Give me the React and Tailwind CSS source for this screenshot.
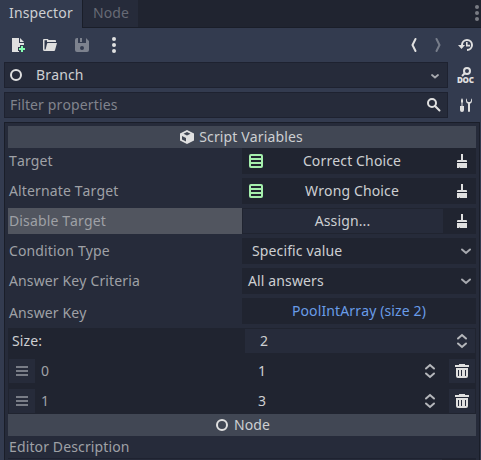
import React from "react";

function Svg({ children, className = "", w = 16, h = 16 }) {
  return (
    <svg width={w} height={h} viewBox={`0 0 ${w} ${h}`} fill="none" className={`block shrink-0 overflow-visible ${className}`}>
      {children}
    </svg>
  );
}

const Ring = () => (
  <Svg>
    <circle cx="8" cy="8" r="5" stroke="#e0e0e0" strokeWidth="2" />
  </Svg>
);

const NewFile = () => (
  <Svg>
    <path fill="#e0e0e0" d="M2 1v14h7v-1H8v-4h2V8h4V6H9V1zm8 0v4h4z" />
    <path fill="#84ffb1" d="M11 9h2v2h2v2h-2v2h-2v-2H9v-2h2z" />
  </Svg>
);

const Folder = () => (
  <Svg>
    <path fill="#e0e0e0" d="M2 2a1 1 0 0 0-1 1v9.5A1.5 1.5 0 0 0 2.5 14H12a1 1 0 0 0 1-.8L15 6H6a1 1 0 0 0-1 .8L3.6 12.5H2.5V3.2H5V5h9V4a1 1 0 0 0-1-1H6.5A1.2 1.2 0 0 0 5 2z" />
  </Svg>
);

const Save = () => (
  <Svg>
    <path fill="#7d828e" fillRule="evenodd" d="M3 1a2 2 0 0 0-2 2v10a2 2 0 0 0 2 2h10a2 2 0 0 0 2-2V4l-3-3v5H4V1zm3 0v4h2V1zM8 9a2 2 0 1 1 0 4 2 2 0 0 1 0-4z" />
  </Svg>
);

const Dots = ({ color }) => (
  <Svg>
    <g fill={color}>
      <circle cx="8" cy="2" r="2" />
      <circle cx="8" cy="8" r="2" />
      <circle cx="8" cy="14" r="2" />
    </g>
  </Svg>
);

const History = () => (
  <Svg>
    <path d="M4 8a5 5 0 1 1 5 5" stroke="#e0e0e0" strokeWidth="2" />
    <path d="M0 8h7l-3.5 4z" fill="#e0e0e0" />
    <path d="M8.8 5v3.6H12" stroke="#e0e0e0" strokeWidth="1.6" />
  </Svg>
);

const Doc = () => (
  <div className="relative h-4 w-4">
    <Svg>
      <circle cx="9" cy="4" r="3" stroke="#e0e0e0" strokeWidth="2" />
      <path d="M7 6L4 9" stroke="#e0e0e0" strokeWidth="2" />
    </Svg>
    <span className="absolute -left-px top-[8px] text-[8px] font-black leading-[10px] tracking-[-0.3px] text-[#e0e0e0]">DOC</span>
  </div>
);

const Tools = () => (
  <Svg>
    <path fill="#e0e0e0" d="M4 1L3 3v2l.5 1v3H2v4a2 2 0 0 0 4 0V9H4.5V6L5 5V3zM9 1.3A3 3 0 0 0 8 4a3 3 0 0 0 2 2.7V14a1 1 0 0 0 2 0V6.7A3 3 0 0 0 14 4a3 3 0 0 0-1-2.7V4l-1 1h-2L9 4z" />
  </Svg>
);

const Search = () => (
  <Svg>
    <circle cx="6" cy="6" r="4" stroke="#e0e0e0" strokeWidth="2" />
    <path d="M9 9l4.5 4.5" stroke="#e0e0e0" strokeWidth="2" strokeLinecap="round" />
  </Svg>
);

const Cube = () => (
  <Svg>
    <path fill="#e0e0e0" d="M8 1l7 3.5v7L8 15l-7-3.5v-7z" />
    <path fill="#414754" d="M8 3l3.5 1.7L8 6.4 4.5 4.7zM3 7l4 2v3.5l-4-2z" />
  </Svg>
);

const Brush = () => (
  <Svg>
    <path fill="#e0e0e0" d="M7 1h2v6h3a1 1 0 0 1 1 1v1H3V8a1 1 0 0 1 1-1h3zM3 10h10v5H6l-.5-1-.5 1H3z" />
  </Svg>
);

const ListGlyph = () => (
  <Svg>
    <rect x="2" y="2" width="12" height="12" rx="1" stroke="#a5efac" strokeWidth="2" />
    <path d="M3 6h10M3 10h10" stroke="#a5efac" strokeWidth="2" />
  </Svg>
);

const Chevron = ({ color = "#a7a9af" }) => (
  <Svg>
    <path d="M4 6.5l4 3.5 4-3.5" stroke={color} strokeWidth="2" strokeLinecap="round" />
  </Svg>
);

const SmallChevron = () => (
  <Svg>
    <path d="M5 8l3 2.5L11 8" stroke="#a7a9af" strokeWidth="1.8" strokeLinecap="round" />
  </Svg>
);

const Spinner = () => (
  <Svg>
    <path d="M4 5.5l4-3.5 4 3.5M4 10.5l4 3.5 4-3.5" stroke="#b5b7bb" strokeWidth="2" strokeLinecap="round" />
  </Svg>
);

const Trash = () => (
  <Svg>
    <path fill="#e0e0e0" fillRule="evenodd" d="M5 1h6v1h4v2H1V2h4zM2 5h12v8a2 2 0 0 1-2 2H4a2 2 0 0 1-2-2zM4 7v6h1V7zm3 0v6h1V7zm4 0v6h1V7z" />
  </Svg>
);

const Grip = () => (
  <Svg>
    <path d="M2 4h12M2 8h12M2 12h12" stroke="#797d87" strokeWidth="2" />
  </Svg>
);

function Row({ label, active, children }) {
  return (
    <div className="mb-1 flex h-[26px]">
      <div className={`w-[234px] pl-px leading-[26px] text-[#9fa1a6] ${active ? "bg-[#51555f]" : ""}`}>{label}</div>
      <div className="flex w-[234px] items-center bg-[#202430]">{children}</div>
    </div>
  );
}

function NodeValue({ children }) {
  return (
    <>
      <div className="ml-1.5"><ListGlyph /></div>
      <div className="w-[176px] text-center">{children}</div>
      <div className="ml-3.5"><Brush /></div>
    </>
  );
}

function Item({ index, value }) {
  return (
    <div className="flex h-[30px] items-center pl-px pr-px">
      <div className="flex h-6 w-[26px] items-center justify-center bg-[#262b3a]"><Grip /></div>
      <div className="w-[217px] pl-1.5 text-[#9fa1a6]">{index}</div>
      <div className="flex-1 pl-1.5">{value}</div>
      <Spinner />
      <div className="ml-[11px] flex h-6 w-[26px] items-center justify-center bg-[#262b3a]"><Trash /></div>
    </div>
  );
}

export default function App() {
  return (
    <div className="flex h-[460px] w-[481px] flex-col overflow-hidden bg-[#333b4f] font-['Noto_Sans',sans-serif] text-[14px] leading-5 tracking-[0.13px] text-[#cdcfd2] [font-kerning:none]">
      <div className="flex h-7 shrink-0 bg-[#202430]">
        <div className="w-[82px] bg-[#333b4f] pl-[9px] leading-[26px]">Inspector</div>
        <div className="w-14 border-b border-l border-[#1a1e29] bg-[#262b3a] pl-2.5 leading-[26px] text-[#666a75]">Node</div>
        <div className="flex flex-1 items-center justify-end border-b border-[#1a1e29] pb-px">
          <div className="-mr-1"><Dots color="#797c84" /></div>
        </div>
      </div>

      <div className="flex h-[34px] shrink-0 items-center pl-2.5 pr-[7px]">
        <div className="flex gap-4"><NewFile /><Folder /><Save /><Dots color="#e0e0e0" /></div>
        <div className="ml-auto flex gap-2">
          <Svg><path d="M9.5 2l-3 6 3 6" stroke="#e0e0e0" strokeWidth="2" strokeLinecap="round" /></Svg>
          <Svg><path d="M6.5 2l3 6-3 6" stroke="#777d8a" strokeWidth="2" strokeLinecap="round" /></Svg>
          <div className="ml-1"><History /></div>
        </div>
      </div>

      <div className="flex h-[26px] shrink-0 items-center pl-1">
        <div className="flex h-[26px] w-[444px] items-center border border-[#1e2230] bg-[#262b3a] pl-[3px] pr-1">
          <Ring />
          <span className="ml-3 flex-1">Branch</span>
          <SmallChevron />
        </div>
        <div className="ml-2.5"><Doc /></div>
      </div>
      <div className="mt-1 flex h-[26px] shrink-0 items-center pl-1">
        <div className="flex h-[26px] w-[444px] items-center border border-[#1e2230] bg-[#262b3a] pl-[5px] pr-[5px]">
          <span className="flex-1 text-[#81848d]">Filter properties</span>
          <Search />
        </div>
        <div className="ml-2.5"><Tools /></div>
      </div>

      <div className="ml-1 mt-1 h-[340px] w-[476px] shrink-0 border border-[#1a1e29] bg-[#262b3a] px-[3px] pt-[3px]">
        <div className="flex h-[22px] items-center justify-center gap-1 bg-[#414754] pr-0.5">
          <Cube /><span>Script Variables</span>
        </div>
        <Row label="Target"><NodeValue>Correct Choice</NodeValue></Row>
        <Row label="Alternate Target"><NodeValue>Wrong Choice</NodeValue></Row>
        <Row label="Disable Target" active>
          <div className="ml-px h-6 w-[200px] bg-[#262b3a] pr-px text-center leading-6">Assign...</div>
          <div className="ml-[11px]"><Brush /></div>
        </Row>
        <Row label="Condition Type">
          <span className="flex-1 pl-2.5">Specific value</span>
          <div className="mr-0.5"><Chevron /></div>
        </Row>
        <Row label="Answer Key Criteria">
          <span className="flex-1 pl-1.5">All answers</span>
          <div className="mr-0.5"><Chevron /></div>
        </Row>
        <Row label={<span className="block pt-0.5">Answer Key</span>}>
          <span className="flex-1 text-center text-[#699ce8]">PoolIntArray (size 2)</span>
        </Row>
        <div className="h-[86px] bg-[#202430]">
          <div className="flex h-[26px] items-center pr-px">
            <div className="w-[237px] pl-1">Size:</div>
            <div className="flex h-6 flex-1 items-center bg-[#262b3a] pl-[15px] pr-[5px]">
              <span className="flex-1">2</span>
              <Spinner />
            </div>
          </div>
          <div className="pt-0.5">
            <Item index="0" value="1" />
            <Item index="1" value="3" />
          </div>
        </div>
        <div className="flex h-[22px] items-center justify-center gap-1 bg-[#414754]">
          <Ring /><span>Node</span>
        </div>
        <div className="h-[22px] pl-px leading-[22px] text-[#9fa1a6]">Editor Description</div>
        <div className="flex h-1 border-t border-[#1e2230]">
          <div className="w-[434px]" />
          <div className="flex-1 bg-[#202430]" />
        </div>
      </div>
    </div>
  );
}
